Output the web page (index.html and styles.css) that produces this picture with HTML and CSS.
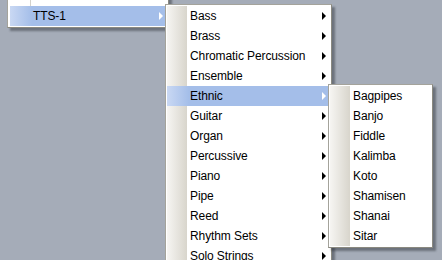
FILE: index.html
```html
<!DOCTYPE html>
<html lang="en">
<head>
<meta charset="UTF-8">
<title>Instrument menu</title>
<link rel="stylesheet" href="styles.css">
</head>
<body>

<div class="desktop">
  <!-- parent menu, mostly scrolled above the window -->
  <div class="menu menu-root">
    <div class="plain-row"></div>
    <div class="plain-row"></div>
    <div class="row active"><span class="label">TTS-1</span><span class="arrow"></span></div>
  </div>

  <!-- instrument categories -->
  <div class="menu menu-cats">
    <div class="row"><span class="gutter"></span><span class="label">Bass</span><span class="arrow"></span></div>
    <div class="row"><span class="gutter"></span><span class="label">Brass</span><span class="arrow"></span></div>
    <div class="row"><span class="gutter"></span><span class="label">Chromatic Percussion</span><span class="arrow"></span></div>
    <div class="row"><span class="gutter"></span><span class="label">Ensemble</span><span class="arrow"></span></div>
    <div class="row active"><span class="gutter"></span><span class="label">Ethnic</span><span class="arrow"></span></div>
    <div class="row"><span class="gutter"></span><span class="label">Guitar</span><span class="arrow"></span></div>
    <div class="row"><span class="gutter"></span><span class="label">Organ</span><span class="arrow"></span></div>
    <div class="row"><span class="gutter"></span><span class="label">Percussive</span><span class="arrow"></span></div>
    <div class="row"><span class="gutter"></span><span class="label">Piano</span><span class="arrow"></span></div>
    <div class="row"><span class="gutter"></span><span class="label">Pipe</span><span class="arrow"></span></div>
    <div class="row"><span class="gutter"></span><span class="label">Reed</span><span class="arrow"></span></div>
    <div class="row"><span class="gutter"></span><span class="label">Rhythm Sets</span><span class="arrow"></span></div>
    <div class="row"><span class="gutter"></span><span class="label">Solo Strings</span><span class="arrow"></span></div>
  </div>

  <!-- Ethnic submenu -->
  <div class="menu menu-ethnic">
    <div class="row"><span class="gutter"></span><span class="label">Bagpipes</span></div>
    <div class="row"><span class="gutter"></span><span class="label">Banjo</span></div>
    <div class="row"><span class="gutter"></span><span class="label">Fiddle</span></div>
    <div class="row"><span class="gutter"></span><span class="label">Kalimba</span></div>
    <div class="row"><span class="gutter"></span><span class="label">Koto</span></div>
    <div class="row"><span class="gutter"></span><span class="label">Shamisen</span></div>
    <div class="row"><span class="gutter"></span><span class="label">Shanai</span></div>
    <div class="row"><span class="gutter"></span><span class="label">Sitar</span></div>
  </div>
</div>

</body>
</html>
```

FILE: styles.css
```css
body, html {
  margin: 0;
  height: 100%;
  overflow: hidden;
  font-family: "Liberation Sans", Arial, sans-serif;
  font-size: 12px;
}
.desktop {
  position: relative;
  width: 442px;
  height: 260px;
  background-color: #a5acb8;
  overflow: hidden;
}

/* popup menus float over the desktop */
.menu {
  position: absolute;
  background-color: #fff;
  border: 1px solid #a4a39b;
  border-right-color: #8a8980;
  border-bottom-color: #8a8980;
  padding: 1px 1px;
  box-shadow: 3px 3px 2px rgba(40, 44, 52, 0.45);
}
.menu-root {
  left: 7px;
  top: -36px;
  width: 157px;
  padding: 1px 1px 1px 2px;
}
.menu-cats {
  left: 165px;
  top: 4px;
  width: 163px;
}
.menu-ethnic {
  left: 328px;
  top: 84px;
  width: 101px;
}

.plain-row {
  height: 20px;
  margin-left: 20px;
  border-left: 1px solid #d4d2cc;
}
.row {
  display: flex;
  align-items: center;
  height: 20px;
  color: #000;
  white-space: nowrap;
}
.gutter {
  width: 20px;
  height: 100%;
  flex: none;
  background: linear-gradient(to right, #f6f5f2, #d8d5cc);
}
.label {
  flex: 1;
  padding-left: 3px;
  letter-spacing: -0.1px;
}
.menu-root .label {
  padding-left: 23px;
}
.arrow {
  width: 0;
  height: 0;
  margin-right: 4px;
  border-top: 4px solid transparent;
  border-bottom: 4px solid transparent;
  border-left: 4px solid #000;
}

/* hovered item */
.row.active {
  background: linear-gradient(to right, #c9d8f3, #a4bee9 22px);
}
.row.active .gutter {
  background: transparent;
}
.row.active .arrow {
  border-left-color: #fff;
}
```
